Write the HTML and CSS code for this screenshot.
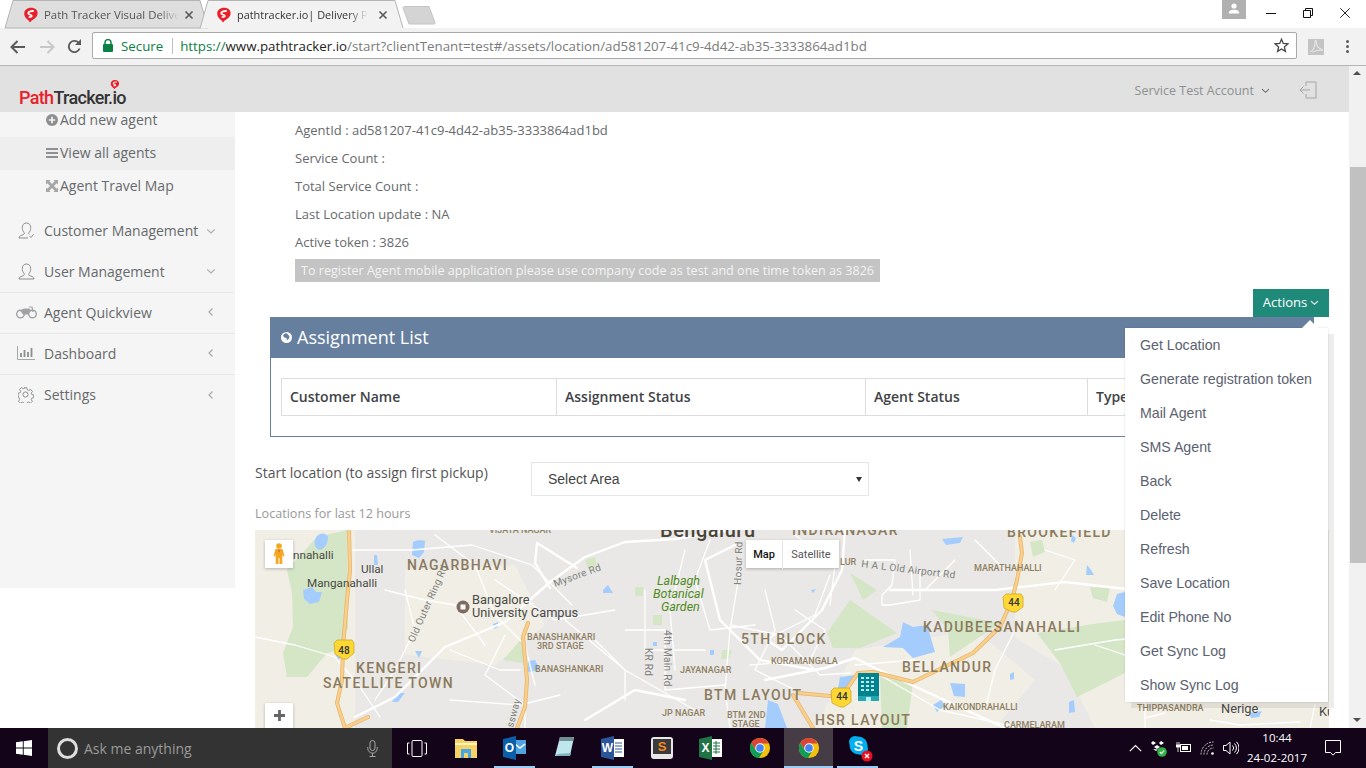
FILE: index.html
```html
<!DOCTYPE html>
<html lang="en">
<head>
<meta charset="utf-8">
<title>pathtracker.io| Delivery Platform</title>
<link rel="stylesheet" href="styles.css">
</head>
<body>
<svg class="defs" width="0" height="0" aria-hidden="true">
  <defs>
    <symbol id="pt-logo" viewBox="0 0 16 16">
      <path d="M8 .8C4 .8 1.2 3.2 1.2 6.800c0 3.200 2.400 5.400 4.400 6.600L7 15.600l1.600-2.200c2.600-1.200 6-3.600 6-7.200C14.600 3 12 .8 8 .8z" fill="#e8202a"/>
      <path d="M10.800 4.200C8.600 3.600 5.400 4.400 5.200 6.200c-.2 1.600 3.400 1.400 3.600 2.600.1.800-1.400 1.400-3 1.200" fill="none" stroke="#fff" stroke-width="1.800"/>
    </symbol>
    <symbol id="chrome-ico" viewBox="0 0 24 24">
      <circle cx="12" cy="12" r="11" fill="#f4c20d"/>
      <path d="M12 1A11 11 0 0 0 2.500 6.500L7 14 12 7h9.500A11 11 0 0 0 12 1z" fill="#db4437"/>
      <path d="M2.500 6.500A11 11 0 0 0 11 23l4.800-8.200L7 14z" fill="#0f9d58"/>
      <circle cx="12" cy="12" r="5.200" fill="#fff"/>
      <circle cx="12" cy="12" r="4.200" fill="#4285f4"/>
    </symbol>
    <symbol id="chev-left" viewBox="0 0 10 10"><path d="M6.500 1.500 3 5l3.500 3.500" fill="none" stroke="#a9aaac" stroke-width="1.200"/></symbol>
    <symbol id="chev-down" viewBox="0 0 10 10"><path d="M1.200 3.400 5 7l3.800-3.600" fill="none" stroke="#a9aaac" stroke-width="1.200"/></symbol>
    <symbol id="chev-dark" viewBox="0 0 10 10"><path d="M1.200 3.400 5 7l3.800-3.600" fill="none" stroke="#6d6f71" stroke-width="1.200"/></symbol>
  </defs>
</svg>

<div class="tabstrip">
  <svg class="tab-shapes" width="445" height="29" viewBox="0 0 445 29">
    <path d="M5 28 13 .5h187l8 27.500z" fill="#dedede" stroke="#b4b4b4"/>
    <path d="M200 28.500 208 .5h187l8 27.500" fill="#f2f2f2" stroke="#b4b4b4"/>
    <path d="M403 8c0-1 1-1.500 2-1.500h24l6 16c.4 1-.2 1.500-1 1.500H409z" fill="#d4d4d4" stroke="#c4c4c4"/>
  </svg>
  <div class="tab tab-inactive">
    <svg class="favicon" width="16" height="16"><use href="#pt-logo"/></svg>
    <span class="tab-title tab-title-a">Path Tracker Visual Delive</span>
    <svg class="tab-x" width="10" height="10" viewBox="0 0 10 10"><path d="M1.500 1.500l7 7m0-7l-7 7" stroke="#5c5c5c" stroke-width="1.700"/></svg>
  </div>
  <div class="tab tab-active">
    <svg class="favicon" width="16" height="16"><use href="#pt-logo"/></svg>
    <span class="tab-title tab-title-b">pathtracker.io| Delivery P</span>
    <svg class="tab-x" width="10" height="10" viewBox="0 0 10 10"><path d="M1.500 1.500l7 7m0-7l-7 7" stroke="#5c5c5c" stroke-width="1.700"/></svg>
  </div>
  <div class="win-controls">
    <div class="profile"><svg width="12" height="11" viewBox="0 0 12 11"><circle cx="6" cy="3" r="2.600" fill="#fff"/><path d="M.8 10.500c0-2.800 2.200-3.800 5.200-3.800s5.200 1 5.200 3.800z" fill="#fff"/></svg></div>
    <div class="win-btn win-min"><svg width="10" height="10" viewBox="0 0 10 10"><path d="M0 5.500h10" stroke="#111"/></svg></div>
    <div class="win-btn win-max"><svg width="10" height="10" viewBox="0 0 10 10"><path d="M.5 2.500h7v7h-7zM2.500 2.500v-2h7v7h-2" fill="none" stroke="#111"/></svg></div>
    <div class="win-btn win-close"><svg width="10" height="10" viewBox="0 0 10 10"><path d="M.3.300l9.400 9.400m0-9.400L.3 9.700" stroke="#111" stroke-width=".9"/></svg></div>
  </div>
</div>

<div class="toolbar">
  <div class="nav-slot"><svg width="16" height="14" viewBox="0 0 16 14"><path d="M7.500 1 1.500 7l6 6M2 7h13" fill="none" stroke="#5a5a5a" stroke-width="2"/></svg></div>
  <div class="nav-slot"><svg width="16" height="14" viewBox="0 0 16 14"><path d="M8.500 1l6 6-6 6M14 7H1" fill="none" stroke="#c8c8c8" stroke-width="2"/></svg></div>
  <div class="nav-slot nav-reload"><svg width="15" height="15" viewBox="0 0 15 15"><path d="M12.600 9.500a5.600 5.600 0 1 1-.6-5.200" fill="none" stroke="#5a5a5a" stroke-width="1.900"/><path d="M14 0v6H8z" fill="#5a5a5a"/></svg></div>
  <div class="omnibox">
    <svg class="lock" width="10" height="13" viewBox="0 0 10 13"><path d="M2 5.500V3.600a3 3 0 0 1 6 0v1.900" fill="none" stroke="#0b8043" stroke-width="1.500"/><rect y="5" width="10" height="8" rx="1" fill="#0b8043"/></svg>
    <span class="secure">Secure</span>
    <span class="omni-div"></span>
    <span class="url"><span class="url-green">https://</span><span class="url-host">www.pathtracker.io</span>/start?clientTenant=test#/assets/location/ad581207-41c9-4d42-ab35-3333864ad1bd</span>
    <svg class="star" width="15" height="15" viewBox="0 0 15 15"><path d="M7.500 1.300 9.300 5.500l4.600.4-3.500 3 1 4.500-3.900-2.400-3.900 2.400 1-4.500-3.500-3 4.600-.4z" fill="none" stroke="#444" stroke-width="1.300"/></svg>
  </div>
  <div class="ext-pdf"><svg width="16" height="16" viewBox="0 0 16 16"><path d="M2.500 13c3-1.500 5-7 4.500-10.500-.2-1.500 1.500-1.500 1.300.3C8 6.500 11 10 14 10.300c1 .2.800 1.200-.3 1-3-.2-7.300.4-9.200 2" fill="none" stroke="#e4e4e4" stroke-width="1.100"/></svg></div>
  <div class="kebab"><i></i><i></i><i></i></div>
</div>

<div class="page">
  <div class="page-col">
    <header class="app-header">
      <div class="logo">
        <span class="logo-text"><span class="logo-red">Path</span>Tracker.io</span>
        <svg class="logo-pin" width="10" height="11"><use href="#pt-logo"/></svg>
      </div>
      <div class="account">Service Test Account <svg width="9" height="9"><use href="#chev-dark"/></svg></div>
      <svg class="logout" width="18" height="18" viewBox="0 0 18 18"><path d="M7 5V1h10v16H7v-4M11 9H1m3.500-3.500L1 9l3.500 3.500" fill="none" stroke="#a3a5a7" stroke-width="1"/></svg>
    </header>
    <div class="page-body">
      <aside class="sidebar">
        <ul class="sub-list">
          <li class="sub-item">
            <svg width="12" height="12" viewBox="0 0 12 12"><circle cx="6" cy="6" r="6" fill="#8d8f91"/><path d="M6 2.800v6.400M2.800 6h6.400" stroke="#f5f5f5" stroke-width="1.700"/></svg>
            Add new agent</li>
          <li class="sub-item sub-active">
            <svg width="12" height="12" viewBox="0 0 12 12"><path d="M0 2h12M0 6h12M0 10h12" stroke="#6f7173" stroke-width="1.600"/></svg>
            View all agents</li>
          <li class="sub-item">
            <svg width="12" height="12" viewBox="0 0 12 12"><path d="M0 0h4.500L3.300 1.300 6 4l2.700-2.700L7.500 0H12v4.500l-1.300-1.200L8 6l2.700 2.700 1.300-1.200V12H7.500l1.200-1.300L6 8l-2.700 2.700L4.500 12H0V7.500l1.300 1.200L4 6 1.300 3.300 0 4.500z" fill="#a4a6a8"/></svg>
            Agent Travel Map</li>
        </ul>
        <ul class="main-list">
          <li class="main-item">
            <span class="main-ico"><svg width="17" height="17" viewBox="0 0 17 17"><path d="M1 16c0-2.500 3-2.600 4.800-3.600.8-.5.500-1.800-.2-2.500C4.400 8.600 4.300 6.800 4.300 5.500 4.300 2.800 6 1 8.500 1s4.200 1.800 4.200 4.500c0 1.300-.1 3.100-1.300 4.400-.7.700-1 1.900-.2 2.500M1 16h9" fill="none" stroke="#8b8d8f"/><path d="M11.500 14l1.500 1.500 2.500-3" fill="none" stroke="#8b8d8f"/></svg></span>
            <span class="main-label">Customer Management</span>
            <svg class="chev" width="10" height="10"><use href="#chev-down"/></svg></li>
          <li class="main-item line">
            <span class="main-ico"><svg width="17" height="17" viewBox="0 0 17 17"><path d="M1 16c0-2.500 3-2.600 4.800-3.600.8-.5.500-1.800-.2-2.500C4.400 8.600 4.300 6.800 4.300 5.500 4.300 2.800 6 1 8.500 1s4.200 1.800 4.200 4.500c0 1.300-.1 3.100-1.300 4.400-.7.700-1 1.900-.2 2.500 1.800 1 4.800 1.100 4.800 3.600z" fill="none" stroke="#8b8d8f"/></svg></span>
            <span class="main-label">User Management</span>
            <svg class="chev" width="10" height="10"><use href="#chev-down"/></svg></li>
          <li class="main-item line">
            <span class="main-ico"><svg width="21" height="13" viewBox="0 0 21 13"><circle cx="4.500" cy="8" r="3.800" fill="none" stroke="#a0a2a4" stroke-width="1.400"/><circle cx="16.500" cy="8" r="3.800" fill="none" stroke="#a0a2a4" stroke-width="1.400"/><path d="M4 4.500 8 2.500h5l2 1.500-3 4.500H7z" fill="#a0a2a4"/><path d="M13 1h3l1 5" fill="none" stroke="#a0a2a4" stroke-width="1.200"/></svg></span>
            <span class="main-label">Agent Quickview</span>
            <svg class="chev" width="10" height="10"><use href="#chev-left"/></svg></li>
          <li class="main-item line">
            <span class="main-ico"><svg width="18" height="14" viewBox="0 0 18 14"><path d="M.5 0v13.500H18" fill="none" stroke="#a4a6a8"/><path d="M4 11V7M7.500 11V4M11 11V6M14.500 11V2" stroke="#8b8d8f" stroke-width="1.800"/></svg></span>
            <span class="main-label">Dashboard</span>
            <svg class="chev" width="10" height="10"><use href="#chev-left"/></svg></li>
          <li class="main-item line">
            <span class="main-ico"><svg width="16" height="16" viewBox="0 0 16 16"><path d="M6.500.8h3l.4 2.200 1.500.7 2-1.200 2 2.200-1.300 1.800.6 1.500 2.100.4v3l-2.100.4-.7 1.500 1.300 1.900-2.100 2.100-1.900-1.300-1.500.6-.4 2.200h-3l-.4-2.200-1.500-.6-1.900 1.300-2.100-2.100 1.300-1.900-.7-1.500L.2 9.500v-3l2.100-.4.600-1.500-1.300-1.800 2-2.200 2 1.200 1.500-.7z" transform="scale(.94)" fill="none" stroke="#8b8d8f"/><circle cx="7.500" cy="7.500" r="2.600" fill="none" stroke="#8b8d8f"/></svg></span>
            <span class="main-label">Settings</span>
            <svg class="chev" width="10" height="10"><use href="#chev-left"/></svg></li>
        </ul>
      </aside>

      <main class="content">
        <div class="info">
          <div class="info-row">AgentId : ad581207-41c9-4d42-ab35-3333864ad1bd</div>
          <div class="info-row">Service Count :</div>
          <div class="info-row">Total Service Count :</div>
          <div class="info-row">Last Location update : NA</div>
          <div class="info-row">Active token : 3826</div>
          <div class="info-row"><span class="notice">To register Agent mobile application please use company code as test and one time token as 3826</span></div>
        </div>

        <div class="actions-row">
          <div class="actions-wrap">
            <button class="actions-btn" type="button">Actions <svg width="9" height="9" viewBox="0 0 10 10"><path d="M1.200 3.400 5 7l3.800-3.600" fill="none" stroke="#fff" stroke-width="1.300"/></svg></button>
            <ul class="actions-menu">
              <li>Get Location</li>
              <li>Generate registration token</li>
              <li>Mail Agent</li>
              <li>SMS Agent</li>
              <li>Back</li>
              <li>Delete</li>
              <li>Refresh</li>
              <li>Save Location</li>
              <li>Edit Phone No</li>
              <li>Get Sync Log</li>
              <li>Show Sync Log</li>
            </ul>
          </div>
        </div>

        <section class="panel">
          <h2 class="panel-title">
            <svg width="11" height="11" viewBox="0 0 11 11"><circle cx="5.500" cy="5.500" r="5.500" fill="#fff"/><path d="M5 1 2 3l1 2.500 2.500.5.500 2.500 2-2 .5-2L7 2.500z" fill="#667f9f"/></svg>
            Assignment List</h2>
          <div class="panel-body">
            <table class="grid">
              <colgroup><col class="c1"><col class="c2"><col class="c3"><col class="c4"></colgroup>
              <thead><tr><th>Customer Name</th><th>Assignment Status</th><th>Agent Status</th><th>Type</th></tr></thead>
            </table>
          </div>
        </section>

        <div class="start-row">
          <label class="start-label" for="area">Start location (to assign first pickup)</label>
          <div class="select-wrap"><select class="area-select" id="area"><option>Select Area</option></select></div>
        </div>
        <p class="loc-note">Locations for last 12 hours</p>

        <div class="map">
          <svg class="map-canvas" width="1074" height="198" viewBox="0 0 1074 198">
            <rect width="1074" height="198" fill="#e9e8e6"/>
            <!-- beige land -->
            <path d="M0 0h100v198H0zM150 40l110-5 30 60-50 40-90-10zM600 120l120-20 60 50-40 48H560zM760 0h314v198H840l-30-60-50-30z" fill="#f0eee5"/>
            <!-- parks -->
            <g class="m-green">
              <path d="M32 40 62 7 92 0l1 97-8 23-13 3-20 24H32l-4-24 10-26-1-34z"/>
              <path d="M572 103l23-33 47 33-37 15h-27z"/>
              <path d="M595 43l27 17-14 10z"/>
              <path d="M677 80l68 13-50 34-2-27z"/>
              <path d="M782 103l63-10 25-3v53l-48 24-17-34z"/>
              <path d="M835 57l20 1-3 14-14-4z"/>
              <path d="M625 147l33 6-6 45h-25z"/>
              <path d="M268 107l-20 23 20 3z"/>
              <path d="M467 120l10 0 -3 9-8 0zM380 57l8 0 0 9-8 0zM398 85l9 0 0 10-9 0zM330 30l10-3 2 9-9 3zM775 12l12-2 3 12-12 5zM165 10l6 0-2 5z"/>
            </g>
            <!-- water -->
            <g class="m-water">
              <path d="M62 6c5-4 9-3 11 1 0 6-3 12-9 13-5-2-6-9-2-14z"/>
              <path d="M158 12c3-2 8-2 12-1l-1 11-5 6-7-3z"/>
              <path d="M48 60l9-3 4 5 6 0-3 10-9 2-6-5z"/>
              <path d="M119 25l3 0 1 10-4 0z"/>
              <path d="M80 122l7-2 1 6-5 4z"/>
              <path d="M160 121l7 0-3 7z"/>
              <path d="M238 94l5-2 0 5-4 2z"/>
              <path d="M273 131l7-1 5 10-12 2z"/>
              <path d="M348 60l5-5 5 8-10 0z"/>
              <path d="M137 172l5-9 8 0-7 9z"/>
              <path d="M648 92l10 5 14-2 8 27-22 6-10-10-20-1 17-10z"/>
              <path d="M687 9l21-2-3 6-14 2z"/>
              <path d="M817 5l4 3-2 5-3-2z"/>
              <path d="M832 35l4 5 3 5-8 0z"/>
              <path d="M862 64l8-2v25l-8-3-4-8z"/>
              <path d="M695 153l15 1 0 13-11-1z"/>
              <path d="M513 170l10 4 9 24h-22z"/>
              <path d="M585 147l15-2-8 20-10-2z"/>
              <path d="M678 175l8-5 4 6-8 6z"/>
              <path d="M755 144l4-2 0 7-4 1z"/>
              <path d="M814 172l5-2 1 12-6 1z"/>
              <path d="M398 112l4 0 0 4-4 0zM455 120l4 0 0 5-4 0zM556 60l5-1-3 4z"/>
              <path d="M995 183l12-2-3 6-8 1z"/>
            </g>
            <!-- minor roads -->
            <g class="r-minor">
              <path d="M0 107l40 8 40 12 25 30 20 30"/>
              <path d="M97 20h60l60-5 60 20 40 40M180 5l40 30 20 50 30 30 10 40M240 50l60 40 60-10"/>
              <path d="M130 60l40 10 30 5 30 40M150 60l10 40-20 40-20 30"/>
              <path d="M250 105l-20 40 40 30v23M195 120l50 20 20 0M195 170l70 5 40-10"/>
              <path d="M310 90l60 50 70 40M340 110l30 30 0 30M370 100l40 0 0 60 60-5"/>
              <path d="M390 60v60h60M430 20l-15 60 5 60M455 10l-15 40 15 50 45-5"/>
              <path d="M485 40l-10 60-5 60 5 38M475 95l50 10 40 40 30-2"/>
              <path d="M510 60l10 40-20 40 40 20M540 80l30 20-15 30-60 5"/>
              <path d="M575 45l-15 40-50 25"/>
              <path d="M540 5l40 30-5 40M610 30l30 0-3 25-10 10 0 10 8 0 30-5 0-30"/>
              <path d="M655 20l3 45M720 10l30 30M700 30l-30 30"/>
              <path d="M790 20l30 10-20 30M760 100l-20 40-10 40"/>
              <path d="M625 145l60 35 80 18M600 135l60-5"/>
              <path d="M840 115l30 10 20 50 0 23M800 120l60-10 60-5"/>
              <path d="M955 190l30 5 60-3M1060 175l-5 23M890 188l20-5"/>
            </g>
            <!-- arterials -->
            <g class="r-major">
              <path d="M100 187l40-20 50-50 60-25 45-40 35-25 40-15 50-3 50-8"/>
              <path d="M480 15l-30 15 15 60 40 40 55 10"/>
              <path d="M295 58l-15-25 2-20 40 25"/>
              <path d="M590 0l-3 40-20 40-40 40-15-10"/>
              <path d="M510 150l60-12 30-10 20 10 130 60"/>
              <path d="M635 60l20 0 85 0 70-8 70 8 185 0"/>
              <path d="M330 190l50-30 50 10"/>
            </g>
            <!-- highways -->
            <g class="r-hw">
              <path class="hw-edge" d="M94 0l1 40-3 30-4 47-1 33-5 23 8 25M113 187l-21 10M273 93l-5 14 4 43-2 27-8 21M765 7l2 16-5 27-5 20-12 27-27 26-60 29-40-10-15 1-17 24-43-4M538 165l20 33"/>
              <path class="hw-core" d="M94 0l1 40-3 30-4 47-1 33-5 23 8 25M113 187l-21 10M273 93l-5 14 4 43-2 27-8 21M765 7l2 16-5 27-5 20-12 27-27 26-60 29-40-10-15 1-17 24-43-4M538 165l20 33"/>
            </g>
            <!-- POI -->
            <circle cx="208" cy="77" r="6.500" fill="#7f6a5f"/><rect x="205.500" y="74.500" width="5" height="5" fill="#fff"/>
            <!-- shields -->
            <g>
              <path class="shield" d="M82 110h15l2 3v10l-7 6h-4l-8-5-1-11z"/>
              <text class="shield-t" x="89" y="124">48</text>
              <path class="shield" d="M751 64h15l2 3v10l-7 5h-4l-8-4-1-11z"/>
              <text class="shield-t" x="759" y="76">44</text>
              <path class="shield" d="M579 158h15l2 3v11l-7 5h-4l-8-4-1-12z"/>
              <text class="shield-t" x="587" y="170">44</text>
            </g>
            <!-- big district labels -->
            <g class="m-big">
              <text x="152" y="40">NAGARBHAVI</text>
              <text x="101" y="143">KENGERI</text>
              <text x="68" y="158">SATELLITE TOWN</text>
              <text x="486" y="114">5TH BLOCK</text>
              <text x="668" y="102">KADUBEESANAHALLI</text>
              <text x="647" y="142">BELLANDUR</text>
              <text x="449" y="170">BTM LAYOUT</text>
              <text x="560" y="195">HSR LAYOUT</text>
              <text x="537" y="5">INDIRANAGAR</text>
              <text x="752" y="7">BROOKEFIELD</text>
            </g>
            <g class="m-small">
              <text x="234" y="3">VIJAYA NAGAR</text>
              <text x="272" y="110">BANASHANKARI</text>
              <text x="282" y="119">3RD STAGE</text>
              <text x="280" y="142">BANASHANKARI</text>
              <text x="425" y="143">JAYANAGAR</text>
              <text x="407" y="186">JP NAGAR</text>
              <text x="585" y="35">LUR</text>
              <text x="719" y="41">MARATHAHALLI</text>
              <text x="516" y="134">KORAMANGALA</text>
              <text x="688" y="180">KAIKONDRAHALLI</text>
              <text x="749" y="198">CARMELARAM</text>
              <text x="472" y="188">BTM 2ND</text>
              <text x="477" y="197">STAGE</text>
              <text x="882" y="181">THIPPASANDRA</text>
            </g>
            <g class="m-place">
              <text class="m-tight" x="38" y="29">nnahalli</text>
              <text class="m-tight" x="106" y="43">Ullal</text>
              <text class="m-tight" x="52" y="57">Manganahalli</text>
              <text x="217" y="74">Bangalore</text>
              <text x="217" y="87">University Campus</text>
              <text x="966" y="183">Nerige</text>
              <text x="1064" y="186">Ku</text>
            </g>
            <text class="m-city" x="405" y="7">Bengaluru</text>
            <g class="m-park">
              <text x="402" y="55">Lalbagh</text>
              <text x="398" y="68">Botanical</text>
              <text x="406" y="81">Garden</text>
            </g>
            <g class="m-road">
              <text transform="translate(300 57) rotate(-20)">Mysore Rd</text>
              <text transform="translate(159 113) rotate(-66)">Old Outer Ring Rd</text>
              <text transform="translate(409 100) rotate(90)">4th Main Rd</text>
              <text transform="translate(390 118) rotate(90)">KR Rd</text>
              <text transform="translate(486 55) rotate(-88)">Hosur Rd</text>
              <text transform="translate(606 37) rotate(7)">H A L Old Airport Rd</text>
              <text transform="translate(258 198) rotate(-75)">ssway</text>
            </g>
            <!-- building marker -->
            <g>
              <rect x="603" y="143" width="21" height="28" fill="#00838f"/>
              <rect x="603" y="166" width="21" height="5" fill="#26a6b0"/>
              <rect x="611" y="167" width="5" height="4" fill="#b2f5f8"/>
              <path d="M606 147h3v2h-3zM611 147h3v2h-3zM616 147h3v2h-3zM606 151h3v2h-3zM611 151h3v2h-3zM616 151h3v2h-3zM606 155h3v2h-3zM611 155h3v2h-3zM616 155h3v2h-3zM606 159h3v2h-3zM611 159h3v2h-3zM616 159h3v2h-3z" fill="#b9e9ec"/>
            </g>
          </svg>
          <div class="map-ctl pegman">
            <svg width="12" height="22" viewBox="0 0 12 22"><circle cx="6" cy="3" r="2.800" fill="#f5a623"/><path d="M2.500 6h7l2 7-1.500.5-.7-2.500V21H6.500v-6h-1v6H2.700V11L2 13.500.5 13z" fill="#f5a623"/><path d="M6 6l-.8 2L6 10l.8-2z" fill="#d0662a"/></svg>
          </div>
          <div class="map-ctl map-type"><span class="type-on">Map</span><span class="type-off">Satellite</span></div>
          <div class="map-ctl zoom-ctl"><svg width="11" height="11" viewBox="0 0 11 11"><path d="M5.500 0v11M0 5.500h11" stroke="#666" stroke-width="2.800"/></svg></div>
        </div>
      </main>
    </div>
  </div>
  <div class="scrollbar">
    <span class="sb-up"></span>
    <span class="sb-thumb"></span>
    <span class="sb-down"></span>
  </div>
</div>

<footer class="taskbar">
  <div class="start"><svg width="16" height="16" viewBox="0 0 16 16"><path d="M0 2.300 6.800 1.300v6.300H0zM7.700 1.200 16 0v7.600H7.700zM0 8.400h6.800v6.300L0 13.700zM7.700 8.400H16V16l-8.300-1.200z" fill="#fff"/></svg></div>
  <div class="cortana">
    <span class="cortana-ring"></span>
    <span class="cortana-text">Ask me anything</span>
    <svg class="mic" width="11" height="17" viewBox="0 0 11 17"><rect x="3" y=".5" width="5" height="10" rx="2.500" fill="none" stroke="#a5a5a5"/><path d="M.8 7v1.500a4.700 4.700 0 0 0 9.400 0V7M5.500 13v3.500M2.500 16.500h6" fill="none" stroke="#a5a5a5"/></svg>
  </div>
  <div class="tb-slot"><svg width="20" height="17" viewBox="0 0 20 17"><rect x="5" y=".5" width="10" height="16" rx="1" fill="none" stroke="#fff"/><path d="M2.500 3H.5v11h2M17.500 3h2v11h-2" fill="none" stroke="#fff"/></svg></div>
  <div class="tb-slot"><svg width="22" height="20" viewBox="0 0 22 20"><path d="M0 1h8l2 2h12v17H0z" fill="#f6d365"/><path d="M0 5h22v2H0z" fill="#fff3c4"/><rect x="6" y="11" width="10" height="9" fill="#4aa5e8"/><rect x="9" y="15" width="4" height="5" fill="#f6d365"/></svg></div>
  <div class="tb-slot tb-open"><svg width="24" height="24" viewBox="0 0 24 24"><path d="M9 4h14v14H9z" fill="#4fa3e0"/><path d="M12 8l5 4 5-4" fill="none" stroke="#fff" stroke-width="1.500"/><path d="M0 3 13 0v24L0 21z" fill="#0a5fa8"/><text class="tb-letter" x="6.500" y="16">O</text></svg></div>
  <div class="tb-slot"><svg width="22" height="24" viewBox="0 0 22 24"><path d="M7 1h14l-4 19H2z" fill="#bfe6ec"/><path d="M7 1h14l-1 4H6z" fill="#6f8f95"/><path d="M2 20h15l1-3-13 1z" fill="#7fb2ba"/></svg></div>
  <div class="tb-slot tb-open"><svg width="24" height="24" viewBox="0 0 24 24"><path d="M8 3h15v18H8z" fill="#fff"/><path d="M14 7h7M14 10h7M14 13h7M14 16h7" stroke="#2b579a"/><path d="M0 3 13 0v24L0 21z" fill="#2b579a"/><text class="tb-letter" x="6.500" y="16">W</text></svg></div>
  <div class="tb-slot"><svg width="22" height="24" viewBox="0 0 22 24"><rect y="1" width="22" height="22" rx="3" fill="#e8e8e8"/><rect x="2" y="3" width="18" height="15" fill="#3b3b3b"/><text class="tb-sub" x="11" y="15">S</text></svg></div>
  <div class="tb-slot"><svg width="24" height="24" viewBox="0 0 24 24"><path d="M8 3h15v18H8z" fill="#fff"/><path d="M14 7h7M14 10h7M14 13h7M14 16h7M17 5v13" stroke="#217346"/><path d="M0 3 13 0v24L0 21z" fill="#217346"/><text class="tb-letter" x="6.500" y="16">X</text></svg></div>
  <div class="tb-slot"><svg width="22" height="22"><use href="#chrome-ico"/></svg></div>
  <div class="tb-slot tb-active tb-open"><svg width="22" height="22"><use href="#chrome-ico"/></svg></div>
  <div class="tb-slot tb-open tb-skype"><svg width="27" height="27" viewBox="0 0 27 27"><circle cx="9" cy="7" r="6" fill="#00aff0"/><circle cx="16" cy="14" r="6" fill="#00aff0"/><circle cx="12.500" cy="10.500" r="9" fill="#00aff0"/><text class="tb-skype-s" x="12.500" y="15.500">S</text><circle cx="21" cy="21" r="5.500" fill="#e81123"/><path d="M19 19l4 4m0-4l-4 4" stroke="#fff" stroke-width="1.300"/></svg></div>
  <div class="tray">
    <div class="tray-slot"><svg width="13" height="8" viewBox="0 0 13 8"><path d="M.8 7.200 6.500 1.500l5.700 5.700" fill="none" stroke="#fff" stroke-width="1.100"/></svg></div>
    <div class="tray-slot"><svg width="16" height="17" viewBox="0 0 16 17"><path d="M2 1l3 2-3 2-2-2zM10 1l3 2-3 2-2-2zM6 5l3 2-3 2-3-2zM2 9l3 2 2-1.500M9 9.500" fill="#fff"/><circle cx="11" cy="12" r="4.800" fill="#2fb344"/><path d="M8.800 12l1.600 1.600 2.800-3" fill="none" stroke="#fff" stroke-width="1.100"/></svg></div>
    <div class="tray-slot"><svg width="15" height="12" viewBox="0 0 15 12"><rect x="4.500" y="2.500" width="10" height="7" fill="none" stroke="#fff"/><rect x="6" y="4" width="6" height="4" fill="#fff"/><path d="M1 0v3M3 0v3M0 3h4v2H0zM2 5v5" stroke="#fff" fill="#fff" stroke-width=".8"/></svg></div>
    <div class="tray-slot"><svg width="15" height="14" viewBox="0 0 15 14"><path d="M1 13.500A12.500 12.500 0 0 1 13.500 1M4 13.500A9.500 9.500 0 0 1 13.500 4M7 13.500A6.500 6.500 0 0 1 13.500 7" fill="none" stroke="#c8c8c8" stroke-dasharray="2 1"/><circle cx="12.500" cy="12.500" r="1.300" fill="#fff"/></svg></div>
    <div class="tray-slot"><svg width="16" height="14" viewBox="0 0 16 14"><path d="M.5 4.500H3L7 1v12L3 9.500H.5z" fill="none" stroke="#fff"/><path d="M9.500 4.500a3.500 3.500 0 0 1 0 5M11.500 2.500a6.300 6.300 0 0 1 0 9M13.500.8a8.800 8.800 0 0 1 0 12.400" fill="none" stroke="#fff"/></svg></div>
    <div class="clock"><span>10:44</span><span>24-02-2017</span></div>
    <div class="notify"><svg width="16" height="16" viewBox="0 0 16 16"><path d="M.5.500h15v12h-5L8 15.200 5.500 12.500h-5z" fill="none" stroke="#fff"/></svg></div>
  </div>
</footer>
</body>
</html>
```
FILE: styles.css
```css
* { box-sizing: border-box; }
html, body { margin: 0; padding: 0; }
body {
  width: 1366px;
  height: 768px;
  overflow: hidden;
  display: flex;
  flex-direction: column;
  font-family: "Open Sans", "Liberation Sans", sans-serif;
  font-size: 13px;
  color: #676a6c;
  background: #fff;
}
ul { list-style: none; margin: 0; padding: 0; }
.defs { position: absolute; }
svg { display: block; flex: none; }

/* browser tabs */
.tabstrip {
  position: relative;
  height: 28px;
  flex: none;
  display: flex;
  background: #fff;
}
.tab-shapes { position: absolute; left: 0; top: 0; }
.tab {
  position: relative;
  width: 198px;
  height: 28px;
  display: flex;
  align-items: center;
  padding-top: 2px;
  font-size: 11.400px;
}
.tab-inactive { margin-left: 5px; padding-left: 18px; color: #555; }
.tab-active { padding-left: 13px; color: #333; font-size: 10.900px; }
.tab-title {
  white-space: nowrap;
  overflow: hidden;
  margin-left: 5px;
  height: 18px;
  line-height: 18px;
  -webkit-mask-image: linear-gradient(to right, #000 85%, transparent);
  mask-image: linear-gradient(to right, #000 85%, transparent);
}
.tab-title-a { width: 135px; margin-left: 5px; }
.tab-title-b { width: 131px; }
.tab-x { margin-left: 5px; }
.tab-active .tab-x { margin-left: 10px; }
.win-controls { margin-left: auto; display: flex; align-items: flex-start; height: 24px; padding-right: 2.500px; }
.profile {
  width: 24px;
  height: 19px;
  background: #b0b0b0;
  display: flex;
  justify-content: center;
  padding-top: 3px;
  margin-right: 6.500px;
}
.win-btn { width: 37px; height: 26px; display: flex; align-items: center; justify-content: center; }

/* browser toolbar */
.toolbar {
  height: 38px;
  flex: none;
  display: flex;
  align-items: center;
  padding-left: 3px;
  background: #f2f2f2;
  border-bottom: 1px solid #b5b5b5;
}
.nav-slot { width: 29px; display: flex; justify-content: center; }
.nav-reload { padding-right: 2px; }
.omnibox {
  width: 1205px;
  height: 27px;
  margin-left: 2px;
  margin-top: -2px;
  padding: 1px 7px 0 10px;
  display: flex;
  align-items: center;
  background: #fff;
  border: 1px solid #a9a9a9;
  border-radius: 2px;
  font-size: 13.300px;
  white-space: nowrap;
}
.lock { margin-top: -1px; }
.secure { color: #0b8043; margin-left: 8px; }
.omni-div { width: 1px; height: 16px; background: #bdbdbd; margin: 0 7px 0 9px; }
.url { color: #7b7b7b; }
.url-green { color: #0b8043; }
.url-host { color: #222; }
.star { margin-left: auto; margin-top: -1px; }
.ext-pdf {
  width: 16px;
  height: 16px;
  margin-left: 11px;
  background: #c4c4c4;
}
.kebab {
  margin-left: 22px;
  display: flex;
  flex-direction: column;
  gap: 2px;
}
.kebab i { width: 3px; height: 3px; background: #5a5a5a; border-radius: 50%; }

/* app page */
.page { flex: 1; min-height: 0; display: flex; overflow: hidden; }
.page-col { width: 1349px; display: flex; flex-direction: column; min-height: 0; }
.app-header {
  position: relative;
  z-index: 2;
  height: 46px;
  flex: none;
  display: flex;
  align-items: center;
  background: #e1e1e1;
  padding: 0 32px 0 19px;
}
.logo { position: relative; margin-top: 17px; }
.logo-text {
  font-family: "Roboto", sans-serif;
  font-weight: 500;
  font-size: 18px;
  letter-spacing: -.68px;
  color: #333;
  line-height: 20px;
}
.logo-red { color: #e8202a; }
.logo-pin { position: absolute; left: 91px; top: -9px; }
.account {
  margin-left: auto;
  display: flex;
  align-items: center;
  gap: 7px;
  font-size: 12.500px;
  color: #8e9092;
  margin-top: 2px;
}
.logout { margin-left: 29px; margin-top: 1px; }

.page-body { flex: 1; min-height: 0; display: flex; }
.sidebar {
  width: 235px;
  height: 476px;
  flex: none;
  background: #f5f5f5;
  font-size: 14px;
  color: #676a6c;
}
.sub-list { margin-top: -8px; }
.sub-item {
  height: 33px;
  display: flex;
  align-items: center;
  gap: 2px;
  padding-left: 46px;
  padding-bottom: 2px;
  white-space: nowrap;
}
.sub-active { background: #eee; }
.main-list { margin-top: 8px; }
.main-item {
  height: 41px;
  display: flex;
  align-items: center;
  padding-left: 14px;
  padding-bottom: 2px;
}
.main-item.line { border-bottom: 1px solid #e8e8e8; }
.main-item:last-child { border-bottom: 0; }
.main-ico { width: 24px; display: flex; justify-content: center; }
.main-label { margin-left: 6px; width: 162px; white-space: nowrap; }

.content { flex: 1; min-width: 0; padding: 4px 20px 0; }
.info { margin-left: 40px; }
.info-row { height: 28px; line-height: 28px; }
.notice {
  display: inline-block;
  line-height: 23px;
  padding: 0 6px;
  background: #c4c4c4;
  color: #f3f3f3;
  font-size: 12.580px;
}
.actions-row { display: flex; justify-content: flex-end; margin-top: 5px; }
.actions-wrap { position: relative; z-index: 3; }
.actions-btn {
  display: flex;
  align-items: center;
  gap: 3px;
  width: 76px;
  height: 28px;
  justify-content: center;
  border: 0;
  padding: 0 0 2px;
  background: #1f8a7a;
  color: #fff;
  font: inherit;
}
.actions-menu {
  position: absolute;
  right: 1px;
  top: 39px;
  width: 203px;
  height: 374px;
  background: #fff;
  box-shadow: 6px 6px 0 rgba(0, 0, 0, .07), 0 0 2px rgba(0, 0, 0, .15);
  font-family: "Liberation Sans", Arial, sans-serif;
  font-size: 14.200px;
  color: #5b6270;
}
.actions-menu::before {
  content: "";
  position: absolute;
  right: 10px;
  top: -8px;
  border: 8px solid transparent;
  border-top: 0;
  border-bottom-color: #fff;
}
.actions-menu li { height: 34px; line-height: 34px; padding-left: 15px; white-space: nowrap; }

.panel { margin: 0 15px; border: 1px solid #667f9f; height: 120px; }
.panel-title {
  margin: 0;
  height: 40px;
  display: flex;
  align-items: center;
  gap: 5px;
  padding: 0 0 2px 10px;
  background: #667f9f;
  color: #fff;
  font-size: 18px;
  font-weight: 400;
}
.panel-body { padding: 20px 10px; }
.grid { width: 100%; table-layout: fixed; border-collapse: collapse; }
.c1 { width: 275px; }
.c2 { width: 309px; }
.c3 { width: 222px; }
.grid th {
  height: 37px;
  padding: 0 8px 2px;
  text-align: left;
  border: 1px solid #ddd;
  font-size: 14px;
  font-weight: 600;
  color: #3f4347;
}
.start-row { display: flex; margin-top: 25px; }
.start-label { width: 276px; font-size: 14px; color: #555; line-height: 22px; }
.select-wrap { position: relative; }
.select-wrap::after {
  content: "";
  position: absolute;
  right: 7px;
  top: 15px;
  border: 3.500px solid transparent;
  border-bottom: 0;
  border-top: 5px solid #333;
}
.area-select {
  display: block;
  width: 338px;
  height: 34px;
  padding-left: 16px;
  appearance: none;
  -webkit-appearance: none;
  border: 1px solid #e5e6e7;
  border-radius: 0;
  background: #fff;
  color: #444;
  font-family: "Liberation Sans", Arial, sans-serif;
  font-size: 14px;
}
.loc-note { margin: 9px 0 7px; line-height: 18px; font-size: 12.600px; color: #999; }

/* map */
.map { position: relative; width: 1074px; height: 198px; overflow: hidden; }
.map-canvas { font-family: "Roboto", sans-serif; }
.m-green { fill: #d4e6c6; }
.m-water { fill: #a4cdfd; }
.r-minor, .r-major, .r-hw { fill: none; stroke-linejoin: round; stroke-linecap: round; }
.r-minor { stroke: #fff; stroke-width: 1.300; }
.r-major { stroke: #fff; stroke-width: 2.400; }
.hw-edge { stroke: #e8b468; stroke-width: 4; }
.hw-core { stroke: #f8cf8c; stroke-width: 2.500; }
.shield { fill: #fdd835; stroke: #c9a21a; stroke-width: .7; }
.shield-t { font-size: 10px; font-weight: 500; fill: #333; text-anchor: middle; }
.m-big { font-size: 14px; font-weight: 500; letter-spacing: 1.350px; fill: #8b7a5c; }
.m-small { font-size: 9px; font-weight: 500; fill: #8f7f62; }
.m-place { font-size: 12.800px; fill: #4a4a46; }
.m-tight { font-size: 11.700px; }
.m-city { font-size: 20px; font-weight: 500; letter-spacing: .5px; fill: #4b4539; }
.m-park { font-size: 12.500px; font-style: italic; fill: #4f8a22; }
.m-road { font-size: 10px; fill: #807f7c; letter-spacing: .3px; }
.map-ctl {
  position: absolute;
  background: #fff;
  box-shadow: 0 1px 3px rgba(0, 0, 0, .25);
  display: flex;
  align-items: center;
  justify-content: center;
}
.pegman { left: 10px; top: 10px; width: 28px; height: 28px; }
.zoom-ctl { left: 10px; top: 173px; width: 28px; height: 28px; padding-bottom: 3px; }
.map-type {
  left: 491px;
  top: 10px;
  width: 93px;
  height: 28px;
  font-family: "Roboto", sans-serif;
  font-size: 11px;
  justify-content: flex-start;
}
.type-on { width: 37px; text-align: center; color: #111; font-weight: 500; line-height: 29px; border-right: 1px solid #e6e6e6; }
.type-off { width: 56px; text-align: center; color: #565656; line-height: 29px; }

/* scrollbar */
.scrollbar {
  position: relative;
  z-index: 1;
  width: 17px;
  background: #f1f1f1;
}
.sb-thumb { position: absolute; left: 1px; right: 0; top: 101px; height: 396px; background: #c1c1c1; }
.sb-up, .sb-down {
  position: absolute;
  left: 4px;
  border: 4px solid transparent;
}
.sb-up { top: 5px; border-top: 0; border-bottom: 4px solid #505050; }
.sb-down { bottom: 6px; border-bottom: 0; border-top: 4px solid #505050; }

/* taskbar */
.taskbar {
  height: 40px;
  flex: none;
  display: flex;
  align-items: stretch;
  background: #13041a;
}
.start { width: 48px; display: flex; align-items: center; justify-content: center; }
.cortana {
  width: 344px;
  display: flex;
  align-items: center;
  padding-left: 9px;
  background: #333;
}
.cortana-ring { width: 21px; height: 21px; border: 3px solid #ddd; border-radius: 50%; }
.cortana-text { margin-left: 6px; font-size: 14px; color: #9a9a9a; }
.mic { margin-left: auto; margin-right: 14px; }
.tb-slot {
  position: relative;
  width: 49px;
  display: flex;
  align-items: center;
  justify-content: center;
}
.tb-open::after {
  content: "";
  position: absolute;
  left: 4px;
  right: 4px;
  bottom: 0;
  height: 2px;
  background: #9ccbf3;
}
.tb-active { background: #453c45; }
.tb-active::after { left: 0; right: 0; }
.tb-skype { padding-left: 3px; }
.tb-letter { font-family: "Liberation Sans", sans-serif; font-size: 12px; font-weight: 700; fill: #fff; text-anchor: middle; }
.tb-sub { font-family: "Liberation Sans", sans-serif; font-size: 13px; font-weight: 700; fill: #f58a1f; text-anchor: middle; }
.tb-skype-s { font-family: "Liberation Sans", sans-serif; font-size: 14px; font-weight: 700; fill: #fff; text-anchor: middle; }
.tray { margin-left: auto; display: flex; padding-right: 11px; color: #fff; }
.tray-slot { width: 24px; display: flex; align-items: center; justify-content: center; }
.clock {
  width: 68px;
  display: flex;
  flex-direction: column;
  align-items: center;
  justify-content: center;
  gap: 4px;
  font-size: 11.500px;
  line-height: 16px;
}
.notify { width: 44px; display: flex; align-items: center; justify-content: center; }
```
